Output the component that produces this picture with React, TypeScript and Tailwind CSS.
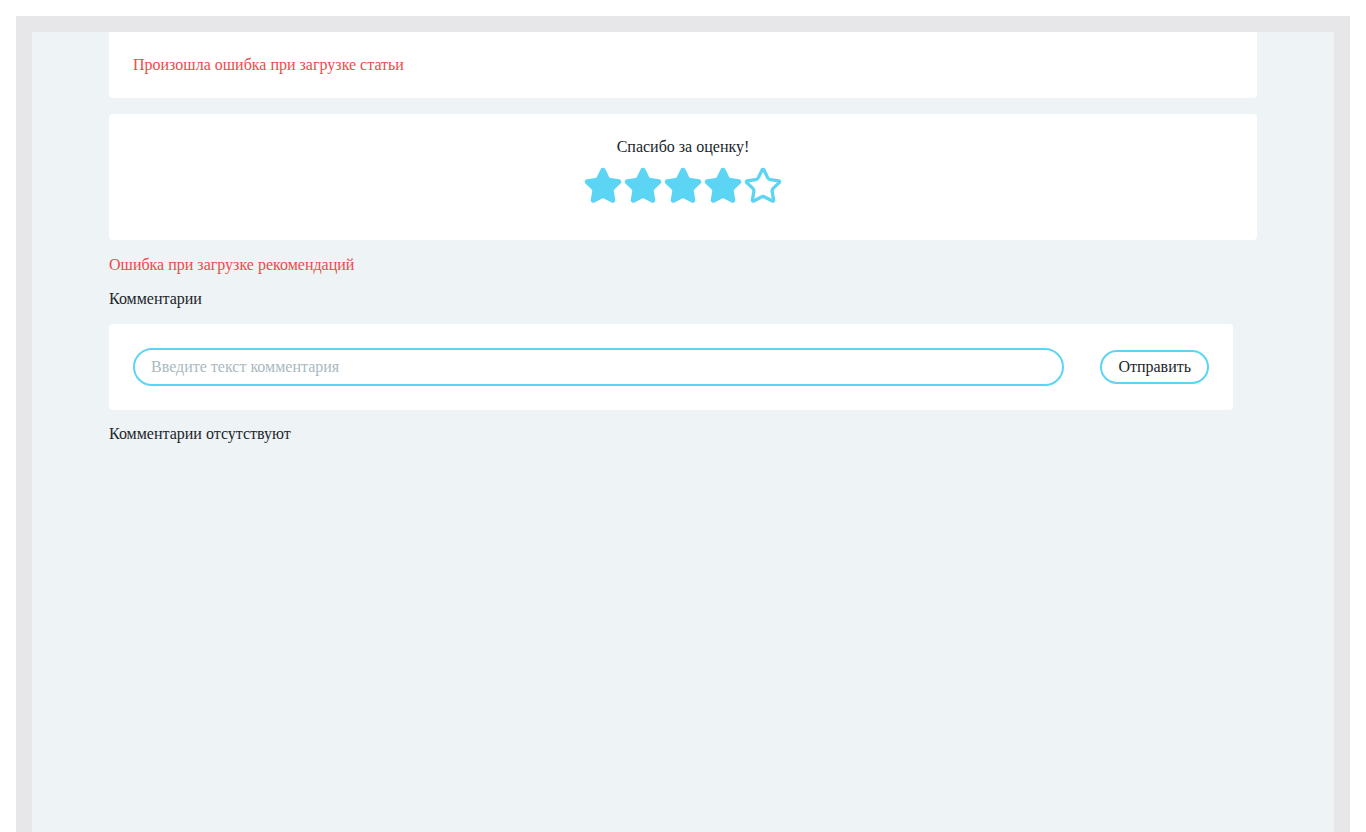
import React, { useState } from "react";
import { Star } from "lucide-react";

const App = () => {
  const [rating] = useState(4);
  const [text, setText] = useState("");

  return (
    <div className="min-h-screen bg-white p-4 font-['Liberation_Serif',serif] text-base text-[#212529]">
      <div className="min-h-[816px] bg-[#e7e7e9] px-4 pt-4">
        <div className="min-h-[800px] bg-[#eef3f6]">
          <div className="mx-auto flex w-[1148px] flex-col">
            <div className="rounded-b bg-white p-6 leading-[18px] text-[#ef4a4a]">
              Произошла ошибка при загрузке статьи
            </div>

            <div className="mt-4 flex h-[126px] flex-col items-center rounded bg-white pt-6">
              <p className="leading-[18px]">Спасибо за оценку!</p>
              <div className="mt-[10px] flex">
                {[1, 2, 3, 4, 5].map((n) => (
                  <Star
                    key={n}
                    size={40}
                    strokeWidth={2}
                    color="#5bd5f3"
                    fill={n <= rating ? "#5bd5f3" : "none"}
                  />
                ))}
              </div>
            </div>

            <p className="mt-4 leading-[18px] text-[#ef4a4a]">
              Ошибка при загрузке рекомендаций
            </p>
            <p className="mt-4 leading-[18px]">Комментарии</p>

            <div className="mt-4 mr-6 flex items-center gap-9 rounded bg-white p-6">
              <input
                value={text}
                onChange={(e) => setText(e.target.value)}
                placeholder="Введите текст комментария"
                className="h-[38px] flex-1 rounded-full border-2 border-[#5bd5f3] px-4 text-base outline-none placeholder:text-[#a9b9bf]"
              />
              <button
                type="button"
                className="h-[34px] rounded-full border-2 border-[#5bd5f3] px-4 leading-[18px]"
              >
                Отправить
              </button>
            </div>

            <p className="mt-[15px] leading-[18px]">Комментарии отсутствуют</p>
          </div>
        </div>
      </div>
    </div>
  );
};

export default App;
